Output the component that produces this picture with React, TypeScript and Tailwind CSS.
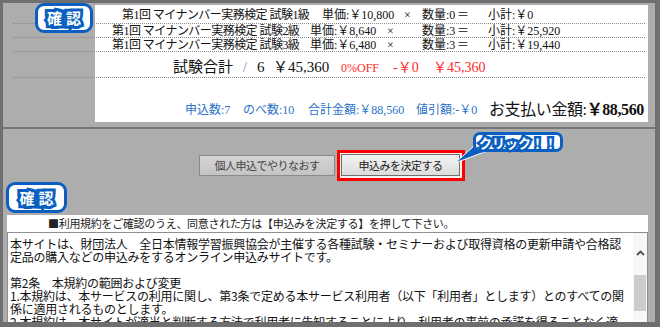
import React from "react";

const BLUE = "#0a5fc1";

function Glyph({ ch }: { ch: string }) {
  return (
    <span className="relative inline-block text-[15px] leading-[18px] font-bold">
      <span className="text-[#0a5fc1] [-webkit-text-stroke:6px_#0a5fc1]">{ch}</span>
      <span className="absolute inset-0 text-white">{ch}</span>
    </span>
  );
}

function Badge() {
  return (
    <div className="w-full h-full rounded-[9px] border-[3px] border-[#0a5fc1] bg-white flex items-center justify-center gap-[4px]">
      <Glyph ch="確" />
      <Glyph ch="認" />
    </div>
  );
}

const serif = "[font-family:'Liberation_Serif','Noto_Sans_CJK_JP',serif]";

function ItemRow({
  first,
  label,
  price,
  qty,
  sub,
  h,
}: {
  first: boolean;
  label: string;
  price: string;
  qty: string;
  sub: string;
  h: string;
}) {
  return (
    <div
      className={`${h} flex items-center border-b border-dotted border-[#8c8c8c] text-[12px] leading-[14px] text-[#111] whitespace-nowrap ${serif} ${
        first ? "pl-[109px] pt-[1px]" : "pl-[99px]"
      }`}
    >
      <span className={`shrink-0 tracking-[-0.55px] ${first ? "w-[200px]" : "w-[198px]"}`}>{label}</span>
      <span className={`shrink-0 ${first ? "w-[82px]" : "w-[77px]"}`}>単価:￥{price}</span>
      <span className={`shrink-0 ${first ? "w-[18px]" : "w-[35px]"}`}>×</span>
      <span className="shrink-0 w-[35px]">数量:{qty}</span>
      <span className="shrink-0 w-[31px]">＝</span>
      <span className="shrink-0">小計:￥{sub}</span>
    </div>
  );
}

const lines = [
  "本サイトは、財団法人　全日本情報学習振興協会が主催する各種試験・セミナーおよび取得資格の更新申請や合格認",
  "定品の購入などの申込みをするオンライン申込みサイトです。",
  "\u00a0",
  "第2条　本規約の範囲および変更",
  "1.本規約は、本サービスの利用に関し、第3条で定める本サービス利用者（以下「利用者」とします）とのすべての関",
  "係に適用されるものとします。",
  "2.本規約は、本サイトが適当と判断する方法で利用者に告知することにより、利用者の事前の承諾を得ることなく適",
];

export default function App() {
  return (
    <div className="w-[660px] h-[327px] bg-[#6f6f6f] pt-[3px] pl-[3px] pr-[5px] pb-[5px] overflow-hidden">
      <div className="relative h-full w-full bg-[#adadad] flex flex-col [font-family:'Noto_Sans_CJK_JP',sans-serif]">
        {/* top section */}
        <div className="pt-[2px]">
          <div className="h-[117px] px-[10px] flex flex-col bg-[linear-gradient(to_right,#adadad_92px,#ffffff_92px,#ffffff_645px,#adadad_645px)]">
            <ItemRow first h="h-[19px]" label="第1回 マイナンバー実務検定 試験1級" price="10,800" qty="0" sub="0" />
            <ItemRow first={false} h="h-[14px]" label="第1回 マイナンバー実務検定 試験2級" price="8,640" qty="3" sub="25,920" />
            <ItemRow first={false} h="h-[14px]" label="第1回 マイナンバー実務検定 試験3級" price="6,480" qty="3" sub="19,440" />
            <div
              className={`h-[26px] pt-[6px] flex items-center border-b border-dotted border-[#8c8c8c] pl-[160px] whitespace-nowrap ${serif}`}
            >
              <span className="shrink-0 w-[67px] text-[15px] text-[#111]">試験合計</span>
              <span className="shrink-0 w-[17px] text-[14px] text-[#6f8fb8] pl-[3px]">/</span>
              <span className="shrink-0 w-[16px] text-[15px] text-[#111]">6</span>
              <span className="shrink-0 w-[68px] text-[15px] text-[#111]">￥45,360</span>
              <span className="shrink-0 w-[52px] text-[12px] text-[#ff2b2b]">0%OFF</span>
              <span className="shrink-0 w-[40px] text-[14px] text-[#ff2b2b]">-￥0</span>
              <span className="shrink-0 text-[14px] text-[#ff2b2b]">￥45,360</span>
            </div>
            <div className={`flex-1 flex items-end pb-[2px] pl-[172px] whitespace-nowrap ${serif}`}>
              <div className="flex items-baseline text-[12px] text-[#2b72c6] leading-[20px]">
                <span className="shrink-0 w-[58px]">申込数:7</span>
                <span className="shrink-0 w-[65px]">のべ数:10</span>
                <span className="shrink-0 w-[108px]">合計金額:￥88,560</span>
                <span className="shrink-0 w-[73px]">値引額:-￥0</span>
              </div>
              <div className="flex items-baseline text-[16px] leading-[20px] text-[#111] tracking-[-0.4px]">
                <span>お支払い金額:</span>
                <span className="font-bold">￥88,560</span>
              </div>
            </div>
          </div>
        </div>
        <div className="h-[5px]" />
        <div className="h-[2px] bg-[#767676]" />

        {/* buttons */}
        <div className="mt-[21px] flex items-center justify-center pl-[6px] gap-[2px]">
          <div className="w-[136px] h-[21px] border border-[#8a8a8a] bg-[linear-gradient(#d4d4d4,#c4c4c4)] flex items-center justify-center text-[11px] tracking-[-0.5px] text-[#444]">
            個人申込でやりなおす
          </div>
          <div className="w-[128px] h-[31px] border-[3px] border-[#ff0000] bg-[#f4f4f4] pl-[1px] pt-[1px]">
            <div className="w-[119px] h-[22px] border border-[#707070] bg-[linear-gradient(#f3f3f3,#dcdcdc)] flex items-center justify-center text-[11px] tracking-[-0.5px] text-[#222]">
              申込みを決定する
            </div>
          </div>
        </div>

        {/* terms */}
        <div className="mt-[34px] ml-[4px] mr-[7px] flex-1 bg-white flex flex-col min-h-0">
          <div className="h-[17px] pl-[41px] flex items-center text-[11px] tracking-[-0.3px] text-[#222] whitespace-nowrap">
            ■利用規約をご確認のうえ、同意された方は【申込みを決定する】を押して下さい。
          </div>
          <div className="flex-1 min-h-0 border-t border-x border-[#8f8f8f] flex overflow-hidden">
            <div className="flex-1 pl-[2px] pt-[4px] text-[12px] leading-[13px] tracking-[-0.25px] text-[#111] overflow-hidden">
              {lines.map((l, i) => (
                <div key={i} className="whitespace-nowrap">
                  {l}
                </div>
              ))}
            </div>
            <div className="w-[14px] bg-[#f7f7f7] flex flex-col items-center">
              <div className="mt-[14px] h-[12px] flex items-center justify-center">
                <svg width="9" height="6" viewBox="0 0 9 6">
                  <polyline points="1,5 4.5,1.5 8,5" fill="none" stroke="#505050" strokeWidth="1.8" />
                </svg>
              </div>
              <div className="mt-[16px] w-[12px] h-[36px] bg-[#cdcdcd]" />
            </div>
          </div>
        </div>

        {/* overlays */}
        <div className="absolute left-[32px] top-0 w-[58px] h-[30px]">
          <Badge />
        </div>
        <div className="absolute left-[3px] top-[179px] w-[61px] h-[31px]">
          <Badge />
        </div>
        <svg className="absolute left-[449px] top-[140px]" width="38" height="26" viewBox="0 0 38 26">
          <polygon points="22,3 35,8 3,20" fill={BLUE} stroke="#ffffff" strokeWidth="1" />
        </svg>
        <div className="absolute left-[470px] top-[129px] w-[90px] h-[20px] rounded-[7px] border-[3px] border-[#0a5fc1] bg-white flex items-center justify-center">
          <span className="relative inline-block text-[13px] leading-[15px] font-bold">
            <span className="text-[#0a5fc1] [-webkit-text-stroke:5px_#0a5fc1]">クリック！！</span>
            <span className="absolute inset-0 text-white">クリック！！</span>
          </span>
        </div>
      </div>
    </div>
  );
}
